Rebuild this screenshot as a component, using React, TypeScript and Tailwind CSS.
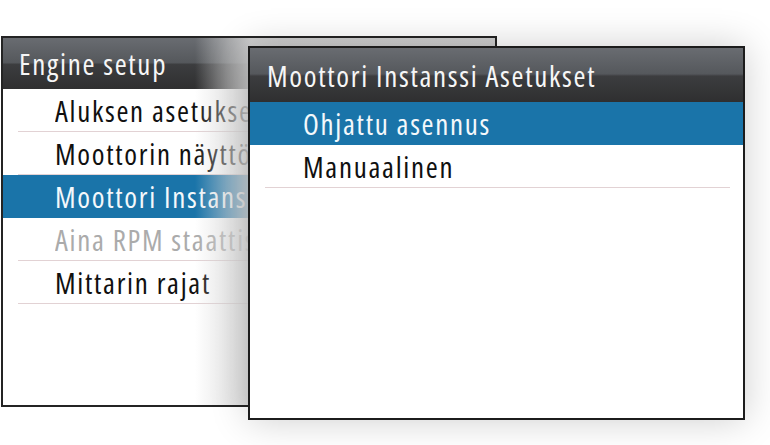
import React from "react";

const font = { fontFamily: '"Open Sans", "Noto Sans", sans-serif', fontStretch: "75%" } as React.CSSProperties;

function Row({
  label,
  kind,
  pl,
  sep,
  clip,
}: {
  label: string;
  kind: "normal" | "selected" | "disabled";
  pl: string;
  sep: string;
  clip?: boolean;
}) {
  const bg = kind === "selected" ? "bg-[#1a74a9] text-[#f4f8fb]" : kind === "disabled" ? "text-[#ababab]" : "text-[#101010]";
  return (
    <div className={`relative h-[43px] flex items-center whitespace-nowrap ${bg} ${pl}`}>
      <span className={`text-[29px] leading-none tracking-[1.7px] ${clip ? "block max-w-[193px] overflow-hidden py-[4px]" : ""}`}>{label}</span>
      {kind !== "selected" && <div className={`absolute bottom-0 h-px bg-[#e2d2d4] ${sep}`} />}
    </div>
  );
}

const header = "bg-[linear-gradient(180deg,#696c71_0%,#55585c_48%,#3c3d3f_52%,#2f2f30_100%)]";

export default function App() {
  return (
    <div className="relative w-[770px] h-[445px] bg-white overflow-hidden" style={font}>
      {/* left panel */}
      <div className="absolute left-[1px] top-[36px] w-[496px] h-[371px] border-2 border-[#242424] bg-white overflow-hidden">
        <div className={`h-[51px] flex items-center pl-[16px] ${header}`}>
          <span className="text-[29px] leading-none tracking-[1.7px] text-[#f6f6f6]">Engine setup</span>
        </div>
        <Row label="Aluksen asetukset" kind="normal" pl="pl-[52px]" sep="left-[15px] right-0" clip />
        <Row label="Moottorin näyttö" kind="normal" pl="pl-[52px]" sep="left-[15px] right-0" clip />
        <Row label="Moottori Instanssi Asetukset" kind="selected" pl="pl-[52px]" sep="" clip />
        <Row label="Aina RPM staattisena" kind="disabled" pl="pl-[52px]" sep="left-[15px] right-0" clip />
        <Row label="Mittarin rajat" kind="normal" pl="pl-[52px]" sep="left-[15px] right-0" clip />
        <div className="absolute top-0 bottom-0 left-[192px] right-0 bg-[linear-gradient(90deg,rgba(214,214,214,0)_0px,rgba(214,214,214,0.55)_32px,rgba(214,214,214,0.92)_56px,rgba(214,214,214,0.92)_100%)]" />
      </div>

      {/* right panel */}
      <div className="absolute left-[248px] top-[46px] w-[497px] h-[374px] border-2 border-[#1c1c1c] bg-white shadow-[0_0_36px_rgba(0,0,0,0.2)]">
        <div className={`h-[54px] flex items-center pl-[17px] ${header}`}>
          <span className="text-[29px] leading-none tracking-[1.7px] text-[#f6f6f6]">Moottori Instanssi Asetukset</span>
        </div>
        <Row label="Ohjattu asennus" kind="selected" pl="pl-[53px]" sep="" />
        <Row label="Manuaalinen" kind="normal" pl="pl-[53px]" sep="left-[15px] right-[13px]" />
      </div>
    </div>
  );
}
